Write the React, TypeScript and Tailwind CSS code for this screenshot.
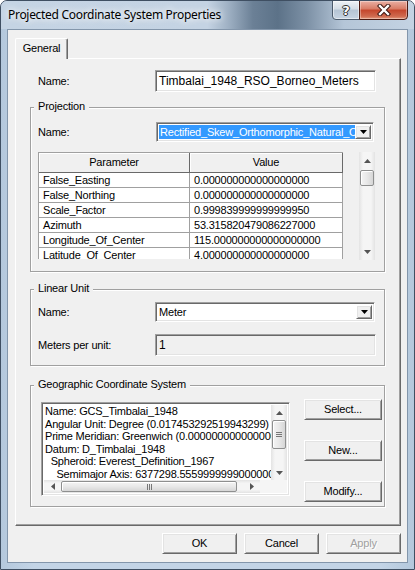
import type { ReactNode } from "react";

const sunken =
  "border border-t-[#a0a0a0] border-l-[#a0a0a0] border-r-white border-b-white shadow-[inset_1px_1px_0_#696969,inset_-1px_-1px_0_#e3e3e3]";
const raised =
  "border border-t-white border-l-white border-r-[#696969] border-b-[#696969] bg-[#f0f0f0] shadow-[inset_1px_1px_0_#e3e3e3,inset_-1px_-1px_0_#a0a0a0]";
const thumbV =
  "rounded-[2px] border border-[#8e8f8f] bg-[linear-gradient(90deg,#f4f4f4,#e8e8e8_50%,#d6d6d6)] shadow-[inset_1px_1px_0_#fff]";
const thumbH =
  "rounded-[2px] border border-[#8e8f8f] bg-[linear-gradient(180deg,#f4f4f4,#e8e8e8_50%,#d6d6d6)] shadow-[inset_1px_1px_0_#fff]";
const trackV = "bg-[linear-gradient(90deg,#e3e3e3,#f5f5f5_25%,#f5f5f5_75%,#e3e3e3)]";
const trackH = "bg-[linear-gradient(180deg,#e3e3e3,#f5f5f5_25%,#f5f5f5_75%,#e3e3e3)]";

const rows = [
  ["False_Easting", "0.000000000000000000"],
  ["False_Northing", "0.000000000000000000"],
  ["Scale_Factor", "0.999839999999999950"],
  ["Azimuth", "53.315820479086227000"],
  ["Longitude_Of_Center", "115.000000000000000000"],
  ["Latitude_Of_Center", "4.000000000000000000"],
];

const gcs = [
  "Name: GCS_Timbalai_1948",
  "Angular Unit: Degree (0.017453292519943299)",
  "Prime Meridian: Greenwich (0.000000000000000000)",
  "Datum: D_Timbalai_1948",
  "  Spheroid: Everest_Definition_1967",
  "    Semimajor Axis: 6377298.555999999900000000",
  "    Semiminor Axis: 6356097.550300896600000000",
];

const Tri = ({ dir, color = "#000" }: { dir: "up" | "down" | "left" | "right"; color?: string }) => {
  const d = {
    up: "M0 4h7L3.5 0z",
    down: "M0 0h7L3.5 4z",
    left: "M4 0v7L0 3.5z",
    right: "M0 0v7L4 3.5z",
  }[dir];
  const horiz = dir === "up" || dir === "down";
  return (
    <svg width={horiz ? 7 : 4} height={horiz ? 4 : 7} viewBox={horiz ? "0 0 7 4" : "0 0 4 7"}>
      <path d={d} fill={color} />
    </svg>
  );
};

const Group = ({ title, className, children }: { title: string; className: string; children: ReactNode }) => (
  <div className={`relative border border-[#a0a0a0] shadow-[inset_1px_1px_0_#fff,1px_1px_0_#fff] ${className}`}>
    <span className="absolute left-[3px] top-[-8px] bg-[#f0f0f0] px-[4px] leading-[13px]">{title}</span>
    {children}
  </div>
);

const Btn = ({ label, className = "", disabled = false }: { label: string; className?: string; disabled?: boolean }) => (
  <button
    className={`${raised} flex items-center justify-center leading-[13px] ${
      disabled ? "text-[#a0a0a0] [text-shadow:1px_1px_0_#fff]" : "text-black"
    } ${className}`}
  >
    {label}
  </button>
);

const Combo = ({ value, selected, className }: { value: string; selected?: boolean; className: string }) => (
  <div className={`${sunken} flex h-[20px] bg-white p-[2px] ${className}`}>
    <div
      className={`flex flex-1 items-center overflow-hidden whitespace-nowrap pl-[1px] leading-[13px] ${
        selected ? "bg-[#3399ff] text-white" : "text-black"
      }`}
    >
      {value}
    </div>
    <div className={`${raised} flex w-[16px] items-center justify-center`}>
      <Tri dir="down" />
    </div>
  </div>
);

export default function App() {
  return (
    <div className="flex h-[570px] w-[415px] flex-col overflow-hidden rounded-t-[7px] border border-[#3f4f62] bg-[linear-gradient(90deg,#b4c8dc,#c3d4e6_8%,#c3d4e6_92%,#b4c8dc)] px-[6px] pb-[6px] font-['Liberation_Sans',Arial,sans-serif] text-[11px] tracking-[-0.2px] text-black">
      {/* title bar */}
      <div className="-mx-[6px] flex h-[28px] items-start justify-between bg-[linear-gradient(90deg,#c5d4e4_0%,#c4d3e3_50%,#9fb1c4_55%,#6b8096_61%,#5c7288_67%,#7c90a5_74%,#b5c6d8_83%,#c4d3e3_100%)] px-[6px]">
        <span className="pl-[1px] pt-[6px] font-['Noto_Sans',sans-serif] text-[12px] leading-[16px] tracking-[-0.3px] [text-shadow:0_0_6px_#fff,0_0_10px_#fff]">
          Projected Coordinate System Properties
        </span>
        <div className="-mt-[1px] flex">
          <div className="flex h-[20px] w-[28px] items-center justify-center rounded-bl-[4px] border border-[#4b5a6b] bg-[linear-gradient(180deg,#eef2f6,#d4dde6_45%,#b5c4d4_50%,#c7d4e2)] shadow-[inset_0_0_0_1px_rgba(255,255,255,0.5)]">
            <span className="font-['DejaVu_Sans',sans-serif] text-[13px] font-bold leading-[13px] text-white [text-shadow:0_0_1px_#222,1px_0_0_#333,-1px_0_0_#333,0_1px_0_#333,0_-1px_0_#333]">
              ?
            </span>
          </div>
          <div className="-ml-[1px] flex h-[20px] w-[49px] items-center justify-center rounded-br-[4px] border border-[#4a1a12] bg-[linear-gradient(180deg,#eab0a4,#d87a64_45%,#c4452c_50%,#cf6a4f_85%,#e49a7e)] shadow-[inset_0_0_0_1px_rgba(255,255,255,0.35)]">
            <svg width="14" height="12" viewBox="0 0 14 12">
              <path d="M3 2l8 8M11 2l-8 8" stroke="#3a1510" strokeWidth="4.4" strokeLinecap="square" />
              <path d="M3 2l8 8M11 2l-8 8" stroke="#fff" strokeWidth="2.4" strokeLinecap="square" />
            </svg>
          </div>
        </div>
      </div>

      {/* client */}
      <div className="flex h-[534px] w-[401px] flex-col border border-[#8396ab] bg-[#f0f0f0]">
        <div className="pl-[7px] pt-[8px]">
          <div className="relative z-10 -mb-[1px] flex h-[21px] w-[53px] items-center justify-center rounded-t-[2px] border-l border-r border-t border-white border-r-[#696969] bg-[#f0f0f0] pb-[2px] shadow-[inset_-1px_0_0_#a0a0a0]">
            General
          </div>
        </div>

        {/* tab page */}
        <div className="ml-[7px] h-[468px] w-[386px] border border-t-white border-l-white border-r-[#696969] border-b-[#696969] pl-[14px] pt-[11px] shadow-[inset_-1px_-1px_0_#a0a0a0]">
          <div className="flex h-[22px] items-center">
            <span className="ml-[8px] w-[117px]">Name:</span>
            <div className={`${sunken} flex h-[22px] w-[221px] items-center bg-white pl-[3px] text-[12px] tracking-normal`}>
              Timbalai_1948_RSO_Borneo_Meters
            </div>
          </div>

          <Group title="Projection" className="mt-[15px] h-[165px] w-[355px] pl-[7px] pt-[14px]">
            <div className="flex h-[20px] items-center">
              <span className="w-[118px]">Name:</span>
              <Combo value="Rectified_Skew_Orthomorphic_Natural_Origin" selected className="w-[218px]" />
            </div>
            <div className="mt-[10px] flex">
              <div className="h-[107px] w-[305px] overflow-hidden border-l border-t border-[#a0a0a0] bg-white">
                <div className="flex h-[20px]">
                  <div className="flex w-[151px] items-center justify-center border-b border-r border-[#696969] bg-[#f0f0f0] shadow-[inset_1px_1px_0_#fff]">
                    Parameter
                  </div>
                  <div className="flex flex-1 items-center justify-center border-b border-r border-[#696969] bg-[#f0f0f0] shadow-[inset_1px_1px_0_#fff]">
                    Value
                  </div>
                </div>
                {rows.map(([p, v]) => (
                  <div key={p} className="flex h-[15px]">
                    <div className="w-[151px] border-b border-r border-[#a0a0a0] pl-[4px] pt-[1px] leading-[13px]">{p}</div>
                    <div className="flex-1 border-b border-r border-[#a0a0a0] pl-[4px] pt-[1px] leading-[13px]">{v}</div>
                  </div>
                ))}
              </div>
              <div className={`ml-[16px] flex h-[108px] w-[16px] flex-col ${trackV}`}>
                <div className="flex h-[18px] items-center justify-center">
                  <Tri dir="up" color="#555" />
                </div>
                <div className={`${thumbV} mx-[1px] h-[16px]`} />
                <div className="flex-1" />
                <div className="flex h-[17px] items-center justify-center">
                  <Tri dir="down" color="#555" />
                </div>
              </div>
            </div>
          </Group>

          <Group title="Linear Unit" className="mt-[17px] h-[77px] w-[355px] pl-[7px] pt-[12px]">
            <div className="flex h-[20px] items-center">
              <span className="w-[117px]">Name:</span>
              <Combo value="Meter" className="w-[220px]" />
            </div>
            <div className="mt-[12px] flex h-[22px] items-center">
              <span className="w-[117px]">Meters per unit:</span>
              <div className={`${sunken} flex h-[22px] w-[221px] items-center bg-[#f0f0f0] pl-[3px] text-[12px]`}>1</div>
            </div>
          </Group>

          <Group title="Geographic Coordinate System" className="mt-[19px] flex h-[122px] w-[355px] items-start pl-[10px] pt-[13px]">
            <div className={`${sunken} mt-[3px] grid h-[94px] w-[249px] grid-cols-[1fr_16px] grid-rows-[1fr_13px] bg-white p-[2px]`}>
              <div className="overflow-hidden whitespace-pre pl-[1px] leading-[12.6px]">{gcs.join("\n")}</div>
              <div className={`flex flex-col ${trackV}`}>
                <div className="flex h-[15px] items-center justify-center">
                  <Tri dir="up" color="#555" />
                </div>
                <div className={`${thumbV} mx-[1px] flex h-[29px] flex-col items-center justify-center gap-[1px]`}>
                  <div className="h-px w-[6px] bg-[#777]" />
                  <div className="h-px w-[6px] bg-[#777]" />
                  <div className="h-px w-[6px] bg-[#777]" />
                </div>
                <div className="flex-1" />
                <div className="flex h-[15px] items-center justify-center">
                  <Tri dir="down" color="#555" />
                </div>
              </div>
              <div className="flex bg-[#f5f5f5]">
                <div className={`flex w-[216px] ${trackH}`}>
                  <div className="flex w-[17px] items-center justify-center">
                    <Tri dir="left" color="#555" />
                  </div>
                  <div className={`${thumbH} my-[1px] flex w-[176px] items-center justify-center gap-[1px]`}>
                    <div className="h-[6px] w-px bg-[#777]" />
                    <div className="h-[6px] w-px bg-[#777]" />
                    <div className="h-[6px] w-px bg-[#777]" />
                  </div>
                  <div className="flex-1" />
                  <div className="flex w-[17px] items-center justify-center">
                    <Tri dir="right" color="#555" />
                  </div>
                </div>
              </div>
              <div className="bg-[#f5f5f5]" />
            </div>
            <div className="ml-[14px] flex flex-col gap-[20px]">
              <Btn label="Select..." className="h-[21px] w-[78px]" />
              <Btn label="New..." className="h-[21px] w-[78px]" />
              <Btn label="Modify..." className="h-[21px] w-[78px]" />
            </div>
          </Group>
        </div>

        <div className="mt-[7px] flex justify-end gap-[7px] pr-[6px]">
          <Btn label="OK" className="h-[21px] w-[75px]" />
          <Btn label="Cancel" className="h-[21px] w-[75px]" />
          <Btn label="Apply" disabled className="h-[21px] w-[75px]" />
        </div>
      </div>
    </div>
  );
}
